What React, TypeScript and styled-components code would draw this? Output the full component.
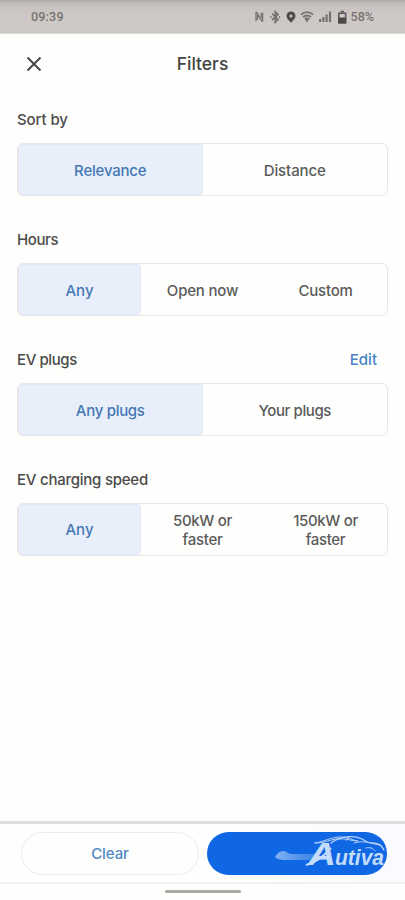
import React from "react";
import styled, { createGlobalStyle } from "styled-components";

const Global = createGlobalStyle`
  * { box-sizing: border-box; }
  html, body { margin: 0; padding: 0; }
  body { background: #fefefd; font-family: Inter, Roboto, sans-serif; color: #4b4b4a; }
  button { font: inherit; color: inherit; background: none; border: 0; padding: 0; margin: 0; }
`;

const Screen = styled.div`
  width: 405px;
  height: 900px;
  display: flex;
  flex-direction: column;
  overflow: hidden;
  background: #fefefd;
`;

const StatusBar = styled.header`
  height: 34px;
  flex: none;
  display: flex;
  align-items: center;
  justify-content: space-between;
  padding: 0 31px;
  background: linear-gradient(#aaa5a3 0, #bdb8b6 2px, #c8c3c1 7px, #cdc8c6 14px, #cdc9c7 33px, #e9e7e6 34px);
  color: #777270;
  font: 500 12.5px/16px Roboto, sans-serif;
`;

const Clock = styled.span`
  letter-spacing: 0.2px;
`;

const StatusIcons = styled.div`
  display: flex;
  align-items: center;
  svg { display: block; }
`;

const TitleBar = styled.div`
  height: 59px;
  flex: none;
  display: grid;
  grid-template-columns: 34px 1fr 34px;
  align-items: center;
  padding: 0 17px;
`;

const CloseButton = styled.button`
  display: flex;
  justify-content: center;
`;

const Title = styled.h1`
  margin: 0;
  text-align: center;
  font-size: 17.5px;
  line-height: 24px;
  font-weight: 500;
  color: #444443;
`;

const Content = styled.main`
  flex: 1;
  padding: 16px 17px 0;
`;

const Section = styled.section`
  height: 119.9px;
`;

const SectionHead = styled.div`
  height: 34px;
  display: flex;
  justify-content: space-between;
  padding: 1px 11px 0 0;
  font-size: 15px;
  line-height: 20px;
  font-weight: 500;
`;

const SectionTitle = styled.h2<{ $track?: number }>`
  margin: 0;
  font: inherit;
  letter-spacing: ${(p) => p.$track ?? 0}px;
`;

const LinkButton = styled.button`
  height: 20px;
  color: #4883c6;
`;

const Segments = styled.div<{ $count: number }>`
  height: 53px;
  width: 371px;
  display: grid;
  grid-template-columns: repeat(${(p) => p.$count}, 1fr);
  border: 1.5px solid #e8e6e7;
  border-radius: 6px;
  overflow: hidden;
`;

const Segment = styled.button<{ $active?: boolean; $track?: number }>`
  display: flex;
  align-items: center;
  justify-content: center;
  text-align: center;
  white-space: pre-line;
  padding-top: 3px;
  font-size: 15px;
  line-height: 18.5px;
  font-weight: 500;
  letter-spacing: ${(p) => p.$track ?? 0}px;
  border-radius: 4px;
  color: ${(p) => (p.$active ? "#4578b3" : "#5b5b5a")};
  background: ${(p) => (p.$active ? "#e9eefb" : "transparent")};
  box-shadow: ${(p) => (p.$active ? "inset 0 0 0 1px #e4e8f5" : "none")};
`;

const Footer = styled.footer`
  height: 63px;
  flex: none;
  display: grid;
  grid-template-columns: 178px 180px;
  gap: 8px;
  padding: 8px 0 0 21px;
  border-top: 3px solid #dededc;
  border-bottom: 2px solid #f4f1f0;
  background: linear-gradient(90deg, #fefefd 270px, #f9fbfe 390px);
`;

const ClearButton = styled.button`
  height: 43px;
  border: 1.5px solid #efebec;
  border-radius: 22px;
  background: #fefefd;
  color: #5288c5;
  font-size: 15px;
  font-weight: 500;
  letter-spacing: -0.1px;
`;

const ApplyButton = styled.button`
  height: 43px;
  border-radius: 22px;
  overflow: hidden;
  background: #1067e3;
  svg { display: block; }
`;

const HomeArea = styled.div`
  height: 16px;
  flex: none;
  display: flex;
  justify-content: center;
  padding-top: 6px;
`;

const HomeHandle = styled.div`
  width: 76px;
  height: 3px;
  border-radius: 2px;
  background: #a9a9a6;
`;

type Option = { label: string; track?: number };
type Group = { title: string; track?: number; action?: string; options: Option[] };

const groups: Group[] = [
  {
    title: "Sort by",
    track: -0.1,
    options: [{ label: "Relevance", track: -0.2 }, { label: "Distance", track: -0.1 }],
  },
  {
    title: "Hours",
    track: -0.4,
    options: [{ label: "Any" }, { label: "Open now", track: -0.2 }, { label: "Custom", track: -0.2 }],
  },
  {
    title: "EV plugs",
    track: -0.4,
    action: "Edit",
    options: [{ label: "Any plugs", track: -0.3 }, { label: "Your plugs", track: -0.4 }],
  },
  {
    title: "EV charging speed",
    track: -0.24,
    options: [
      { label: "Any" },
      { label: "50kW or\nfaster", track: -0.3 },
      { label: "150kW or\nfaster", track: -0.35 },
    ],
  },
];

const StatusGlyphs = () => (
  <svg width="98" height="20" viewBox="252 7 98 20" fill="none" stroke="#777270" strokeWidth="1.3">
    <path d="M255 21v-8.500h.8l5 8.500h.8v-8.500M256.500 20v-5M260.200 13v5" />
    <path d="M271 13.500l6 6-2.700 2.700v-10.500l2.700 2.700-6 5.800" strokeWidth="1.700" />
    <path d="M269.200 17h1.200M278 17h1.200" strokeWidth="1.800" />
    <path fillRule="evenodd" d="M290 11.500c-2.600 0-4.500 1.900-4.500 4.400 0 2.700 2.400 4.300 4.500 6.900 2.100-2.600 4.500-4.200 4.500-6.900 0-2.500-1.900-4.400-4.500-4.400zm0 2.900a1.500 1.500 0 110 3 1.500 1.500 0 010-3z" fill="#4f4b49" stroke="none" />
    <path d="M300 14.600c3.600-3.100 8.400-3.100 12 0M302 17c2.500-2 5.500-2 8 0" strokeWidth="1.900" />
    <path d="M303.200 18.300q2.800-1.500 5.600 0l-2.800 4.200z" fill="#777270" stroke="none" />
    <path d="M319.200 22v-3M322.400 22v-5M325.600 22v-7.500M329 22V11.500" strokeWidth="2.200" />
    <path d="M337.800 13.200h6.800v9.600h-6.800zM339.500 11.500h3.500" stroke="#5d5957" strokeWidth="1.600" />
    <path d="M337.200 17.500h8v6h-8z" fill="#4d4947" stroke="none" />
  </svg>
);

const BrandMark = () => (
  <svg width="180" height="43" viewBox="207 832 180 43">
    <defs>
      <linearGradient id="trail" x1="0" x2="1">
        <stop offset="0" stopColor="#80b2f3" />
        <stop offset="0.4" stopColor="#639ded" />
        <stop offset="1" stopColor="#3b82e8" />
      </linearGradient>
    </defs>
    <path d="M275 857c2-3 4-6 9-6 3 0 3 3 8 3h23l-5 6h-24c-5 0-8 0-11-3z" fill="url(#trail)" />
    <g fill="none" stroke="#b5d2f7" strokeLinecap="round">
      <path d="M315 843c9-1 15-6 26-6 7 0 10 3 17 4-7 0-12-3-20-2-7 0-12 4-23 4" strokeWidth="1" />
      <path d="M331 843c9-7 23-8 31-4 4 2 5 4 10 4 6 0 10 2 12 7" strokeWidth="1.300" />
      <path d="M349 836.500l-3 4M354 843c10-3 15 0 26 2" strokeWidth="1" />
      <path d="M366 848c4-1 7 0 9 3" strokeWidth="1" />
    </g>
    <g fill="#c4ddfb" fontFamily="Liberation Sans, sans-serif" fontWeight="700" fontStyle="italic">
      <text x="308" y="865" fontSize="31" textLength="28" lengthAdjust="spacingAndGlyphs">A</text>
      <text x="335" y="865" fontSize="22.500" textLength="49" lengthAdjust="spacingAndGlyphs">utiva</text>
    </g>
    <path d="M306 865c9-2 17-8 25-17" stroke="#c4ddfb" strokeWidth="2" fill="none" />
  </svg>
);

export default function App() {
  return (
    <>
      <Global />
      <Screen>
        <StatusBar>
          <Clock>09:39</Clock>
          <StatusIcons>
            <StatusGlyphs />
            <span>58%</span>
          </StatusIcons>
        </StatusBar>
        <TitleBar>
          <CloseButton aria-label="Close">
            <svg width="16" height="16" viewBox="0 0 16 16" stroke="#454544" strokeWidth="1.900">
              <path d="M1.500 1.500l13 13M14.500 1.500l-13 13" />
            </svg>
          </CloseButton>
          <Title>Filters</Title>
        </TitleBar>
        <Content>
          {groups.map((g) => (
            <Section key={g.title}>
              <SectionHead>
                <SectionTitle $track={g.track}>{g.title}</SectionTitle>
                {g.action && <LinkButton>{g.action}</LinkButton>}
              </SectionHead>
              <Segments $count={g.options.length}>
                {g.options.map((o, i) => (
                  <Segment key={o.label} $active={i === 0} $track={o.track}>{o.label}</Segment>
                ))}
              </Segments>
            </Section>
          ))}
        </Content>
        <Footer>
          <ClearButton>Clear</ClearButton>
          <ApplyButton aria-label="Apply"><BrandMark /></ApplyButton>
        </Footer>
        <HomeArea><HomeHandle /></HomeArea>
      </Screen>
    </>
  );
}
